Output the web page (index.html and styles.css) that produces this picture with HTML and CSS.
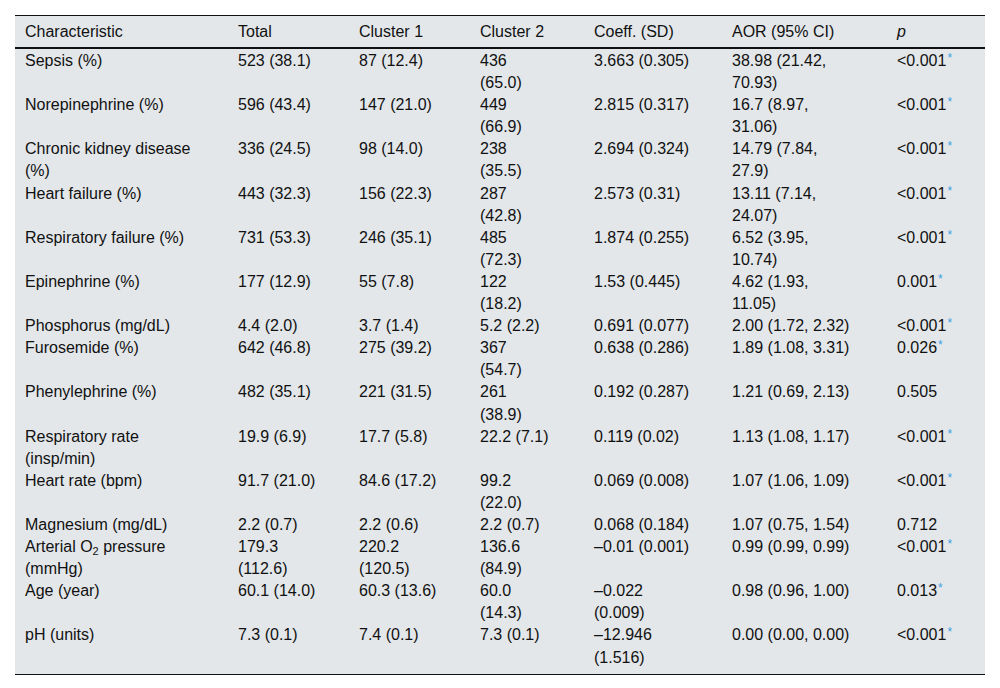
FILE: index.html
```html
<!DOCTYPE html>
<html lang="en">
<head>
<meta charset="utf-8">
<title>Cluster characteristics</title>
<link rel="stylesheet" href="styles.css">
</head>
<body>
<table class="stats">
  <colgroup>
    <col class="c-char"><col class="c-total"><col class="c-cl1"><col class="c-cl2"><col class="c-coef"><col class="c-aor"><col class="c-p">
  </colgroup>
  <thead>
    <tr>
      <th>Characteristic</th><th>Total</th><th>Cluster 1</th><th>Cluster 2</th><th>Coeff. (SD)</th><th>AOR (95% CI)</th><th class="pcol"><i>p</i></th>
    </tr>
  </thead>
  <tbody>
    <tr><td>Sepsis (%)</td><td>523 (38.1)</td><td>87 (12.4)</td><td>436 (65.0)</td><td>3.663 (0.305)</td><td>38.98 (21.42, 70.93)</td><td class="pcol">&lt;0.001<sup class="sig">*</sup></td></tr>
    <tr><td>Norepinephrine (%)</td><td>596 (43.4)</td><td>147 (21.0)</td><td>449 (66.9)</td><td>2.815 (0.317)</td><td>16.7 (8.97, 31.06)</td><td class="pcol">&lt;0.001<sup class="sig">*</sup></td></tr>
    <tr><td>Chronic kidney disease (%)</td><td>336 (24.5)</td><td>98 (14.0)</td><td>238 (35.5)</td><td>2.694 (0.324)</td><td>14.79 (7.84, 27.9)</td><td class="pcol">&lt;0.001<sup class="sig">*</sup></td></tr>
    <tr><td>Heart failure (%)</td><td>443 (32.3)</td><td>156 (22.3)</td><td>287 (42.8)</td><td>2.573 (0.31)</td><td>13.11 (7.14, 24.07)</td><td class="pcol">&lt;0.001<sup class="sig">*</sup></td></tr>
    <tr><td>Respiratory failure (%)</td><td>731 (53.3)</td><td>246 (35.1)</td><td>485 (72.3)</td><td>1.874 (0.255)</td><td>6.52 (3.95, 10.74)</td><td class="pcol">&lt;0.001<sup class="sig">*</sup></td></tr>
    <tr><td>Epinephrine (%)</td><td>177 (12.9)</td><td>55 (7.8)</td><td>122 (18.2)</td><td>1.53 (0.445)</td><td>4.62 (1.93, 11.05)</td><td class="pcol">0.001<sup class="sig">*</sup></td></tr>
    <tr><td>Phosphorus (mg/dL)</td><td>4.4 (2.0)</td><td>3.7 (1.4)</td><td>5.2 (2.2)</td><td>0.691 (0.077)</td><td>2.00 (1.72, 2.32)</td><td class="pcol">&lt;0.001<sup class="sig">*</sup></td></tr>
    <tr><td>Furosemide (%)</td><td>642 (46.8)</td><td>275 (39.2)</td><td>367 (54.7)</td><td>0.638 (0.286)</td><td>1.89 (1.08, 3.31)</td><td class="pcol">0.026<sup class="sig">*</sup></td></tr>
    <tr><td>Phenylephrine (%)</td><td>482 (35.1)</td><td>221 (31.5)</td><td>261 (38.9)</td><td>0.192 (0.287)</td><td>1.21 (0.69, 2.13)</td><td class="pcol">0.505</td></tr>
    <tr><td>Respiratory rate (insp/min)</td><td>19.9 (6.9)</td><td>17.7 (5.8)</td><td>22.2 (7.1)</td><td>0.119 (0.02)</td><td>1.13 (1.08, 1.17)</td><td class="pcol">&lt;0.001<sup class="sig">*</sup></td></tr>
    <tr><td>Heart rate (bpm)</td><td>91.7 (21.0)</td><td>84.6 (17.2)</td><td>99.2 (22.0)</td><td>0.069 (0.008)</td><td>1.07 (1.06, 1.09)</td><td class="pcol">&lt;0.001<sup class="sig">*</sup></td></tr>
    <tr><td>Magnesium (mg/dL)</td><td>2.2 (0.7)</td><td>2.2 (0.6)</td><td>2.2 (0.7)</td><td>0.068 (0.184)</td><td>1.07 (0.75, 1.54)</td><td class="pcol">0.712</td></tr>
    <tr><td>Arterial O<sub class="sub">2</sub> pressure (mmHg)</td><td>179.3 (112.6)</td><td>220.2 (120.5)</td><td>136.6 (84.9)</td><td>&#8211;0.01 (0.001)</td><td>0.99 (0.99, 0.99)</td><td class="pcol">&lt;0.001<sup class="sig">*</sup></td></tr>
    <tr><td>Age (year)</td><td>60.1 (14.0)</td><td>60.3 (13.6)</td><td>60.0 (14.3)</td><td>&#8211;0.022 (0.009)</td><td>0.98 (0.96, 1.00)</td><td class="pcol">0.013<sup class="sig">*</sup></td></tr>
    <tr class="last"><td>pH (units)</td><td>7.3 (0.1)</td><td>7.4 (0.1)</td><td>7.3 (0.1)</td><td>&#8211;12.946 (1.516)</td><td>0.00 (0.00, 0.00)</td><td class="pcol">&lt;0.001<sup class="sig">*</sup></td></tr>
  </tbody>
</table>
</body>
</html>
```

FILE: styles.css
```css
html, body {
  margin: 0;
  padding: 0;
  background: #ffffff;
}

body {
  padding: 15px;
  font-family: "Liberation Sans", Arial, Helvetica, sans-serif;
  font-size: 16px;
  color: #111111;
}

.stats {
  width: 970px;
  table-layout: fixed;
  border-collapse: collapse;
  background: #e3e7ea;
  border-top: 1px solid #111111;
  border-bottom: 1px solid #111111;
}

.c-char { width: 213px; }
.c-total { width: 121px; }
.c-cl1 { width: 121px; }
.c-cl2 { width: 114px; }
.c-coef { width: 138px; }
.c-aor { width: 165px; }
.c-p { width: 98px; }

.stats th {
  font-weight: normal;
  text-align: left;
  vertical-align: top;
  line-height: 22px;
  padding: 5px 32px 4px 10px;
  border-bottom: 2px solid #111111;
}

.stats td {
  text-align: left;
  vertical-align: top;
  line-height: 22.1px;
  padding: 0 32px 0 10px;
}

.stats tbody tr:first-child td {
  padding-top: 1px;
}

.stats .pcol {
  padding-right: 6px;
  white-space: nowrap;
}

.stats tr.last td {
  padding-bottom: 5px;
}

.sig {
  color: #3aa2e0;
  font-size: 12px;
  line-height: 0;
  vertical-align: 4px;
  margin-left: 1px;
}

.sub {
  font-size: 11px;
  line-height: 0;
  vertical-align: -3px;
}
```
